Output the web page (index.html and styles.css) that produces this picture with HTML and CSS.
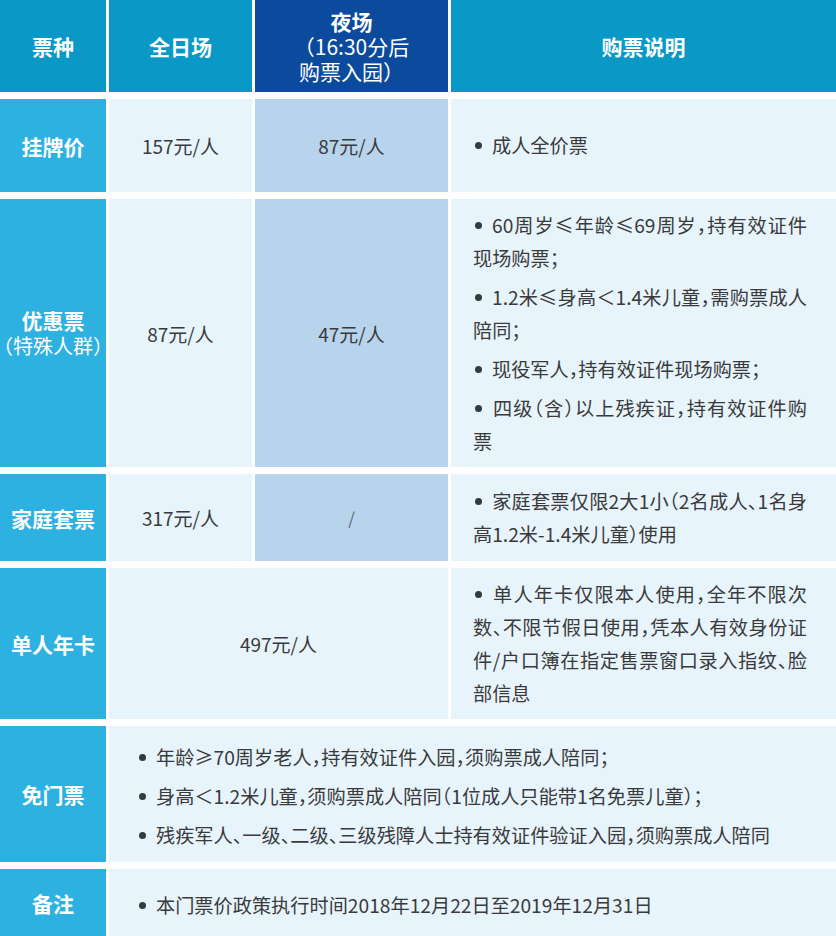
FILE: index.html
```html
<!DOCTYPE html>
<html lang="zh-CN">
<head>
<meta charset="utf-8">
<title>门票价格</title>
<link rel="stylesheet" href="styles.css">
</head>
<body>
<div class="price-table">
  <div class="cell head">票种</div>
  <div class="cell head">全日场</div>
  <div class="cell head head-night">
    <span class="head-main">夜场</span>
    <span class="head-sub">（16:30分后</span>
    <span class="head-sub">购票入园）</span>
  </div>
  <div class="cell head">购票说明</div>

  <div class="cell label">挂牌价</div>
  <div class="cell value">157元/人</div>
  <div class="cell value value-night">87元/人</div>
  <div class="cell desc">
    <p>成人全价票</p>
  </div>

  <div class="cell label">
    <span>优惠票</span>
    <span class="label-sub">（特殊人群）</span>
  </div>
  <div class="cell value">87元/人</div>
  <div class="cell value value-night">47元/人</div>
  <div class="cell desc">
    <p>60周岁≤年龄≤69周岁，持有效证件现场购票；</p>
    <p>1.2米≤身高＜1.4米儿童，需购票成人陪同；</p>
    <p>现役军人，持有效证件现场购票；</p>
    <p>四级（含）以上残疾证，持有效证件购票</p>
  </div>

  <div class="cell label">家庭套票</div>
  <div class="cell value">317元/人</div>
  <div class="cell value value-night"><span class="none">/</span></div>
  <div class="cell desc">
    <p>家庭套票仅限2大1小（2名成人、1名身高1.2米-1.4米儿童）使用</p>
  </div>

  <div class="cell label">单人年卡</div>
  <div class="cell value span-2">497元/人</div>
  <div class="cell desc">
    <p>单人年卡仅限本人使用，全年不限次数、不限节假日使用，凭本人有效身份证件/户口簿在指定售票窗口录入指纹、脸部信息</p>
  </div>

  <div class="cell label">免门票</div>
  <div class="cell desc desc-wide">
    <p>年龄≥70周岁老人，持有效证件入园，须购票成人陪同；</p>
    <p>身高＜1.2米儿童，须购票成人陪同（1位成人只能带1名免票儿童）；</p>
    <p>残疾军人、一级、二级、三级残障人士持有效证件验证入园，须购票成人陪同</p>
  </div>

  <div class="cell label">备注</div>
  <div class="cell desc desc-wide">
    <p>本门票价政策执行时间2018年12月22日至2019年12月31日</p>
  </div>
</div>
</body>
</html>
```

FILE: styles.css
```css
* {
  box-sizing: border-box;
  margin: 0;
  padding: 0;
}

html,
body {
  background: #ffffff;
}

body {
  width: 836px;
  height: 936px;
  overflow: hidden;
  font-family: "Noto Sans CJK SC", "Noto Sans", sans-serif;
  color: #3a3a3a;
}

.price-table {
  display: grid;
  grid-template-columns: 106px 143px 193px 385px;
  grid-template-rows: 92px 93px 268px 87px 151px 136px 67px;
  column-gap: 3px;
  row-gap: 7px;
}

.cell {
  display: flex;
  flex-direction: column;
  align-items: center;
  justify-content: center;
  text-align: center;
}

.head {
  background: #0a99c6;
  color: #ffffff;
  font-size: 21px;
  font-weight: 700;
  line-height: 25px;
}

.head-night {
  background: #0b4a9d;
}

.head-sub {
  font-weight: 400;
}

.label {
  background: #2db1e0;
  color: #ffffff;
  font-size: 21px;
  font-weight: 700;
  line-height: 26px;
}

.label-sub {
  font-size: 20px;
  font-weight: 400;
  white-space: nowrap;
  font-feature-settings: "halt";
}

.value {
  background: #e7f4fc;
  font-size: 19px;
  color: #3a3a3a;
}

.value-night {
  background: #b8d3ec;
}

.none {
  color: #5f6a76;
  font-size: 17px;
}

.span-2 {
  grid-column: span 2;
}

.desc {
  background: #e7f4fc;
  align-items: stretch;
  text-align: justify;
  font-size: 19.2px;
  line-height: 33px;
  font-feature-settings: "halt";
  text-autospace: no-autospace;
  padding: 0 29px 0 22px;
}

.desc p + p {
  margin-top: 6px;
}

.desc p::before {
  content: "";
  display: inline-block;
  width: 7px;
  height: 7px;
  margin: 0 10px 0 2px;
  border-radius: 50%;
  background: #333a40;
  vertical-align: 4px;
}

.desc-wide {
  grid-column: span 3;
  text-align: left;
  padding: 5px 20px 0 28px;
}
```
